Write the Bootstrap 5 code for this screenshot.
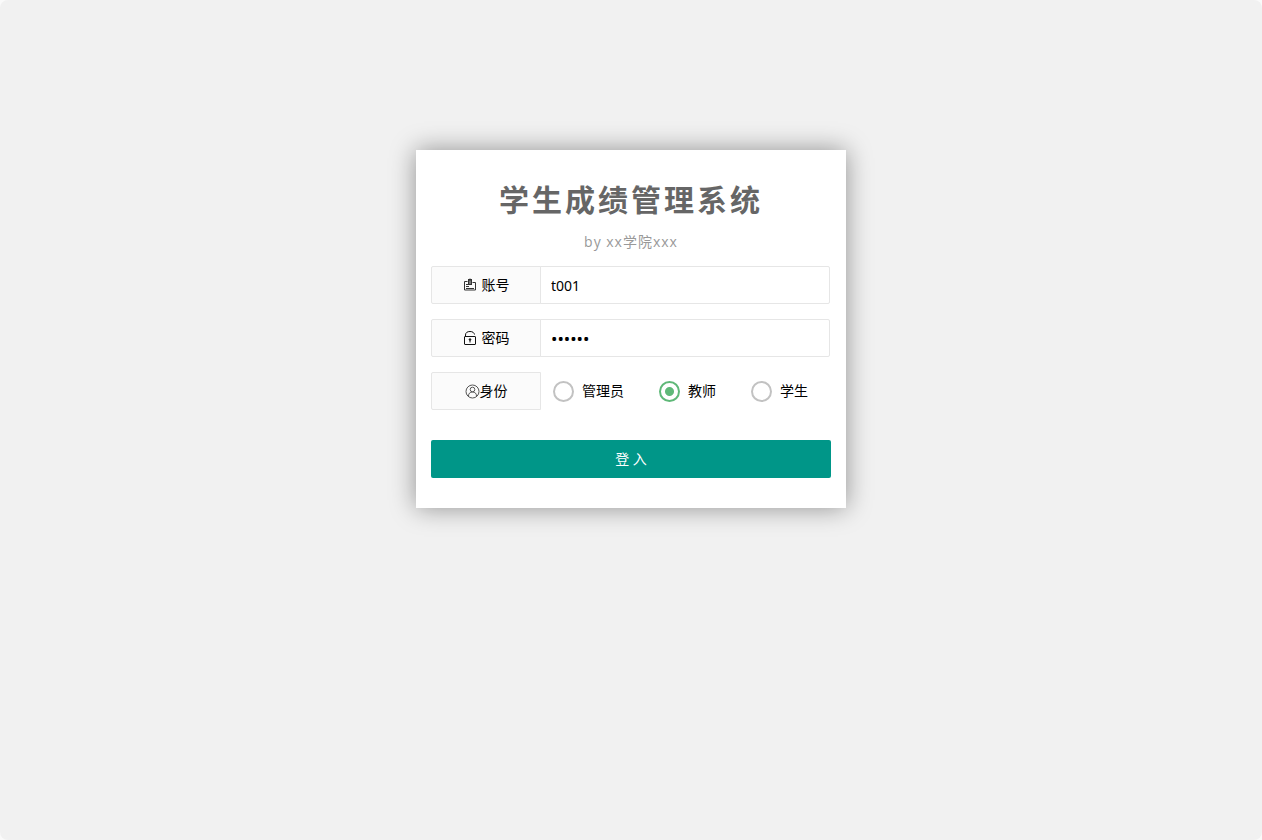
<!DOCTYPE html>
<html lang="zh-CN">
<head>
<meta charset="utf-8">
<meta name="viewport" content="width=device-width, initial-scale=1">
<title>学生成绩管理系统</title>
<link href="https://cdn.jsdelivr.net/npm/bootstrap@5.3.0/dist/css/bootstrap.min.css" rel="stylesheet">
<style>
html { background: #fafafa; }
body { background: transparent; color: #000; font: 14px/20px "Noto Sans", "Noto Sans CJK SC", sans-serif; }
.login-page { background: #f1f1f1; border-radius: 8px; padding: 150px 15px 15px; }
.login-card { max-width: 430px; padding: 30px 15px; background: #fff; box-shadow: 0 0 24px rgba(0,0,0,.4); }
.login-title { font-size: 30px; line-height: 40px; font-weight: 700; letter-spacing: 3px; color: #666; margin-bottom: 12px; }
.login-by { font-family: "Open Sans", "Noto Sans CJK SC", sans-serif; line-height: 20px; letter-spacing: 1px; color: #999; margin-bottom: 14px; }
.login-form { gap: 15px; }
.field-row { height: 38px; }
.field-label { width: 110px; height: 38px; background: #fbfbfb; border: 1px solid #e6e6e6; border-radius: 2px 0 0 2px; }
.field-label.spaced { gap: 5px; }
.field-input, .field-input:focus { height: 38px; min-width: 0; margin-left: -1px; margin-right: 1px; padding: 0 10px; border: 1px solid #e6e6e6; border-radius: 0 2px 2px 0; color: #000; font-size: 14px; box-shadow: none; }
.field-input[type="password"], .field-input[type="password"]:focus { font-size: 17px; }
.role-list { padding-left: 12px; gap: 35px; }
.role-item { gap: 8px; }
.role-item input { appearance: none; width: 21px; height: 21px; margin: 0; border: 2px solid #c2c2c2; border-radius: 50%; background: #fff; }
.role-item input:checked { border-color: #5fb878; background: radial-gradient(circle, #5fb878 4px, #fff 5px); }
.btn-login, .btn-login:hover { height: 38px; margin-top: 15px; padding: 0 0 2px; border: 0; border-radius: 2px; background: #009688; color: #fff; font-size: 14px; }
</style>
</head>
<body>
<main class="login-page min-vh-100">
  <div class="login-card mx-auto">
    <h1 class="login-title text-center">学生成绩管理系统</h1>
    <p class="login-by text-center">by xx学院xxx</p>
    <form class="login-form d-flex flex-column">
      <div class="field-row d-flex">
        <label class="field-label spaced d-flex align-items-center justify-content-center flex-shrink-0" for="account">
          <svg width="14" height="14" viewBox="0 0 14 14" fill="none" stroke="#333" aria-hidden="true"><path d="M4.500 3.500H1.500V12H12.500V4.500H9.500M3 10.500H11M3 8.500H6M3 6.500H5"/><rect x="5.500" y="1.500" width="3" height="5" fill="#777"/><path d="M7 .5V3"/></svg>
          <span>账号</span>
        </label>
        <input class="field-input form-control" id="account" type="text" value="t001">
      </div>
      <div class="field-row d-flex">
        <label class="field-label spaced d-flex align-items-center justify-content-center flex-shrink-0" for="password">
          <svg width="14" height="14" viewBox="0 0 14 14" fill="none" stroke="#111" aria-hidden="true"><rect x="1.500" y="5.500" width="11" height="8" rx=".5"/><path d="M2.500 5.500V4C2.500 1.500 4.500.5 7 .5S11 1.500 11.500 3.500M7 9V11.500"/><circle cx="7" cy="8.500" r=".8" fill="#111"/></svg>
          <span>密码</span>
        </label>
        <input class="field-input form-control" id="password" type="password" value="123456">
      </div>
      <div class="field-row d-flex" role="radiogroup" aria-labelledby="role-label">
        <div class="field-label d-flex align-items-center justify-content-center flex-shrink-0" id="role-label">
          <svg width="15" height="15" viewBox="0 0 15 15" fill="none" stroke="#555" aria-hidden="true"><circle cx="7.500" cy="7.500" r="6.500"/><circle cx="7.500" cy="5.500" r="2.300"/><path d="M3.500 12C3.500 9.500 5 8 7.500 8S11.500 9.500 11.500 12"/></svg>
          <span>身份</span>
        </div>
        <div class="role-list d-flex align-items-center">
          <label class="role-item d-flex align-items-center"><input type="radio" name="role" value="admin"><span>管理员</span></label>
          <label class="role-item d-flex align-items-center"><input type="radio" name="role" value="teacher" checked><span>教师</span></label>
          <label class="role-item d-flex align-items-center"><input type="radio" name="role" value="student"><span>学生</span></label>
        </div>
      </div>
      <button class="btn btn-login w-100" type="submit">登 入</button>
    </form>
  </div>
</main>
<script src="https://cdn.jsdelivr.net/npm/bootstrap@5.3.0/dist/js/bootstrap.bundle.min.js"></script>
</body>
</html>
